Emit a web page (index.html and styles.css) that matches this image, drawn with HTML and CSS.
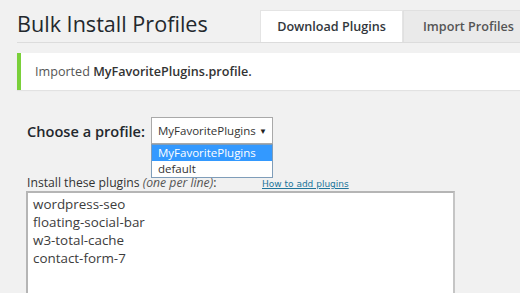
FILE: index.html
```html
<!DOCTYPE html>
<html lang="en">
<head>
    <meta charset="UTF-8">
    <title>Bulk Install Profiles</title>
    <link rel="stylesheet" href="styles.css">
</head>
<body>
    <div class="wrap">
        <div class="header">
            <h1>Bulk Install Profiles</h1>
            <div class="tabs">
                <span class="tab active">Download Plugins</span>
                <span class="tab">Import Profiles</span>
            </div>
        </div>

        <div class="notice">
            <p>Imported <strong>MyFavoritePlugins.profile.</strong></p>
        </div>

        <div class="form">
            <div class="profile-row">
                <label class="profile-label">Choose a profile:</label>
                <div class="select-wrap">
                    <div class="select">
                        <span>MyFavoritePlugins</span>
                        <span class="arrow">▼</span>
                    </div>
                    <ul class="dropdown">
                        <li class="selected">MyFavoritePlugins</li>
                        <li>default</li>
                    </ul>
                </div>
            </div>

            <div class="plugins-head">
                <span class="plugins-label">Install these plugins <em>(one per line)</em>:</span>
                <a href="#" class="help-link">How to add plugins</a>
            </div>
            <div class="plugins-box">wordpress-seo
floating-social-bar
w3-total-cache
contact-form-7</div>
        </div>
    </div>
</body>
</html>
```

FILE: styles.css
```css
:root {
    --bg: #f1f1f1;
    --text: #23282d;
    --green: #7ad03a;
    --link: #21759b;
}

* {
    margin: 0;
    padding: 0;
    box-sizing: border-box;
}

body {
    background: var(--bg);
    font-family: 'Open Sans', sans-serif;
    color: var(--text);
    overflow: hidden;
    height: 293px;
}

.wrap {
    padding-left: 17px;
}

.header {
    display: flex;
    align-items: flex-end;
    border-bottom: 1px solid #dcdcdc;
    height: 43px;
    overflow: hidden;
}

h1 {
    font-size: 21.6px;
    font-weight: 400;
    align-self: flex-start;
    margin-top: 9px;
    width: 243px;
    flex-shrink: 0;
    white-space: nowrap;
}

.tabs {
    display: flex;
    flex-shrink: 0;
}

.tab {
    font-size: 12.6px;
    font-weight: 600;
    color: #555;
    background: #eaeaea;
    border: 1px solid #e0e0e0;
    border-bottom: none;
    padding: 0 19px;
    height: 32px;
    line-height: 31px;
    white-space: nowrap;
}

.tab.active {
    background: #fff;
    color: #32373c;
    border-color: #e4e4e4;
    width: 143px;
    text-align: center;
    padding: 0;
}

.notice {
    background: #fff;
    border-left: 4px solid var(--green);
    margin-top: 10px;
    height: 37px;
    display: flex;
    align-items: center;
    padding-left: 14px;
    box-shadow: 0 1px 1px rgba(0, 0, 0, 0.06);
}

.notice p {
    font-size: 12.6px;
    color: #555;
}

.notice strong {
    font-weight: 600;
    color: #333;
}

.form {
    padding-left: 10px;
    padding-top: 27px;
}

.profile-row {
    display: flex;
    align-items: center;
}

.profile-label {
    font-size: 14.6px;
    font-weight: 600;
    margin-right: 6px;
    width: 118px;
    white-space: nowrap;
}

.select-wrap {
    position: relative;
    width: 122px;
}

.select {
    height: 27px;
    border: 1px solid #a9a9a9;
    background: #fff;
    display: flex;
    align-items: center;
    justify-content: space-between;
    padding: 0 5px 0 6px;
    font-size: 11.5px;
    color: #333;
}

.arrow {
    font-size: 8px;
    color: #222;
}

.dropdown {
    position: absolute;
    left: 0;
    right: 0;
    top: 27px;
    list-style: none;
    background: #fff;
    border: 1px solid #7f9db9;
    font-size: 11.5px;
    color: #333;
    z-index: 10;
}

.dropdown li {
    height: 16px;
    line-height: 15px;
    padding-left: 6px;
}

.dropdown li.selected {
    background: #3399ff;
    color: #fff;
}

.plugins-head {
    display: flex;
    align-items: baseline;
    margin-top: 33px;
    height: 14px;
}

.plugins-label {
    font-size: 12.2px;
    line-height: 12px;
    color: #333;
    width: 235px;
}

.plugins-label em {
    color: #555;
}

.help-link {
    font-family: 'DejaVu Sans', Verdana, sans-serif;
    font-size: 9px;
    line-height: 12px;
    color: var(--link);
}

.plugins-box {
    margin-left: -1px;
    width: 429px;
    height: 110px;
    background: #fff;
    border: 2px solid #b5b5b5;
    border-right-color: #c5c5c5;
    border-bottom: none;
    white-space: pre;
    font-size: 13.4px;
    line-height: 18px;
    color: #3c3c3c;
    padding: 2px 5px;
}
```
